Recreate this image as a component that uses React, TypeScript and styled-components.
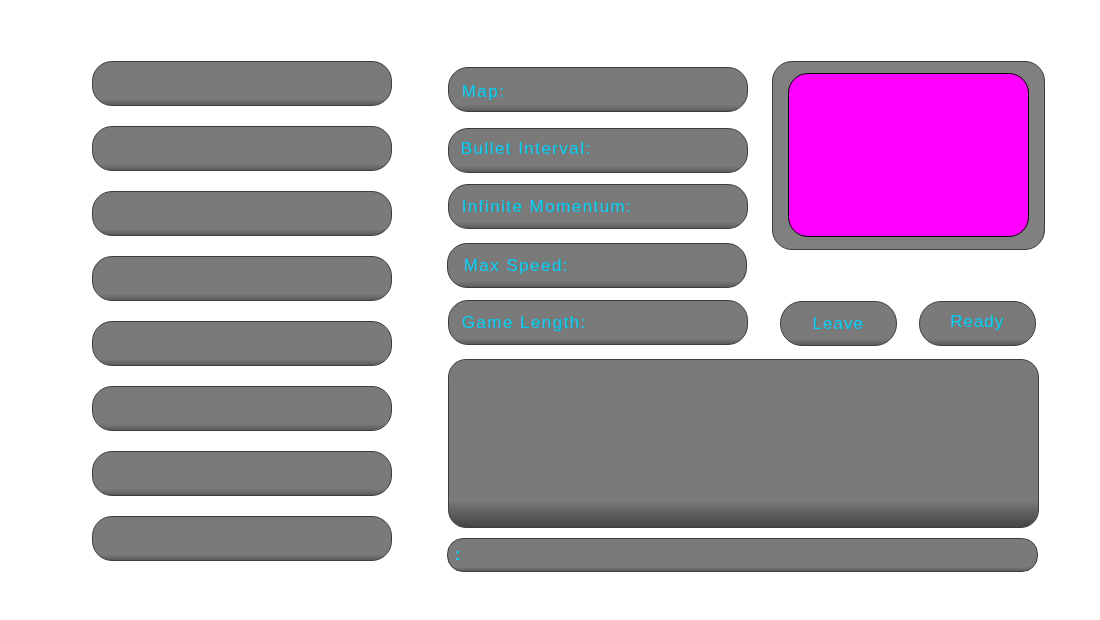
import React from 'react';
import styled, { createGlobalStyle } from 'styled-components';

const GREY = '#7a7a7a';
const EDGE = '#3d3d3d';
const CYAN = '#00cbef';

const players = Array.from({ length: 8 }, (_, i) => i);

// gaps between the setting rows are uneven in the layout, so each row carries its own offsets
const settings = [
  { label: 'Map:', top: 6, left: 1, indent: 14, dy: 2 },
  { label: 'Bullet Interval:', top: 16, left: 1, indent: 13, dy: -2 },
  { label: 'Infinite Momentum:', top: 11, left: 1, indent: 14, dy: 0 },
  { label: 'Max Speed:', top: 14, left: 0, indent: 17, dy: 0 },
  { label: 'Game Length:', top: 12, left: 1, indent: 14, dy: 0 },
];

const GlobalStyle = createGlobalStyle`
  html, body {
    margin: 0;
    padding: 0;
    background: #ffffff;
  }
  body {
    font-family: 'Liberation Sans', Arial, sans-serif;
  }
`;

export default function App() {
  return (
    <>
      <GlobalStyle />
      <Page>
        <PlayerList>
          {players.map((p) => (
            <PlayerSlot key={p} />
          ))}
        </PlayerList>
        <Lobby>
          <TopRow>
            <Settings>
              {settings.map((s) => (
                <SettingRow key={s.label} $top={s.top} $left={s.left}>
                  <SettingLabel $indent={s.indent} $dy={s.dy}>
                    {s.label}
                  </SettingLabel>
                </SettingRow>
              ))}
            </Settings>
            <Side>
              <PreviewFrame>
                <Preview />
              </PreviewFrame>
              <Buttons>
                <PillButton $lift={0}>Leave</PillButton>
                <PillButton $lift={2}>Ready</PillButton>
              </Buttons>
            </Side>
          </TopRow>
          <ChatLog />
          <ChatInput>:</ChatInput>
        </Lobby>
      </Page>
    </>
  );
}

const Page = styled.div`
  display: flex;
  align-items: flex-start;
  width: 1100px;
  height: 620px;
  padding: 61px 0 0 92px;
  box-sizing: border-box;
`;

const PlayerList = styled.div`
  display: flex;
  flex-direction: column;
  gap: 20px;
  width: 300px;
`;

const PlayerSlot = styled.div`
  height: 45px;
  box-sizing: border-box;
  border: 1px solid ${EDGE};
  border-radius: 20px;
  background: linear-gradient(
    to bottom,
    ${GREY} 0%,
    ${GREY} 86%,
    #5c5c5c 100%
  );
`;

const Lobby = styled.div`
  display: flex;
  flex-direction: column;
  margin-left: 55px;
  width: 598px;
`;

const TopRow = styled.div`
  display: flex;
  align-items: flex-start;
`;

const Settings = styled.div`
  display: flex;
  flex-direction: column;
  width: 301px;
`;

const SettingRow = styled.div<{ $top: number; $left: number }>`
  display: flex;
  align-items: center;
  height: 45px;
  width: 300px;
  margin-top: ${(p) => p.$top}px;
  margin-left: ${(p) => p.$left}px;
  box-sizing: border-box;
  border: 1px solid ${EDGE};
  border-radius: 20px;
  background: linear-gradient(
    to bottom,
    ${GREY} 0%,
    ${GREY} 86%,
    #5c5c5c 100%
  );
`;

const SettingLabel = styled.span<{ $indent: number; $dy: number }>`
  padding-left: ${(p) => p.$indent - 1}px;
  margin-top: ${(p) => p.$dy * 2}px;
  color: ${CYAN};
  font-size: 17px;
  letter-spacing: 1.45px;
  white-space: nowrap;
`;

const Side = styled.div`
  display: flex;
  flex-direction: column;
  margin-left: 24px;
  width: 273px;
`;

const PreviewFrame = styled.div`
  display: flex;
  height: 189px;
  padding: 11px 15px 12px 15px;
  box-sizing: border-box;
  border: 1px solid ${EDGE};
  border-radius: 20px;
  background: #808080;
`;

const Preview = styled.div`
  flex: 1;
  border: 1px solid #000000;
  border-radius: 20px;
  background: #ff00ff;
`;

const Buttons = styled.div`
  display: flex;
  gap: 22px;
  margin-top: 51px;
  padding-left: 8px;
`;

const PillButton = styled.div<{ $lift: number }>`
  display: flex;
  align-items: center;
  justify-content: center;
  width: 117px;
  height: 45px;
  box-sizing: border-box;
  padding-bottom: ${(p) => p.$lift * 2}px;
  border: 1px solid ${EDGE};
  border-radius: 22px;
  background: linear-gradient(
    to bottom,
    ${GREY} 0%,
    ${GREY} 86%,
    #5c5c5c 100%
  );
  color: ${CYAN};
  font-size: 17px;
  letter-spacing: 1px;
`;

const ChatLog = styled.div`
  height: 169px;
  width: 591px;
  margin-top: 13px;
  margin-left: 1px;
  box-sizing: border-box;
  border: 1px solid ${EDGE};
  border-radius: 18px;
  background: linear-gradient(
    to bottom,
    ${GREY} 0%,
    ${GREY} 84%,
    #5e5e5e 92%,
    #454545 100%
  );
`;

const ChatInput = styled.div`
  display: flex;
  align-items: center;
  height: 34px;
  width: 591px;
  margin-top: 10px;
  padding-left: 7px;
  box-sizing: border-box;
  border: 1px solid ${EDGE};
  border-radius: 16px;
  background: linear-gradient(
    to bottom,
    ${GREY} 0%,
    ${GREY} 88%,
    #5c5c5c 100%
  );
  color: ${CYAN};
  font-size: 17px;
  font-weight: bold;
`;
